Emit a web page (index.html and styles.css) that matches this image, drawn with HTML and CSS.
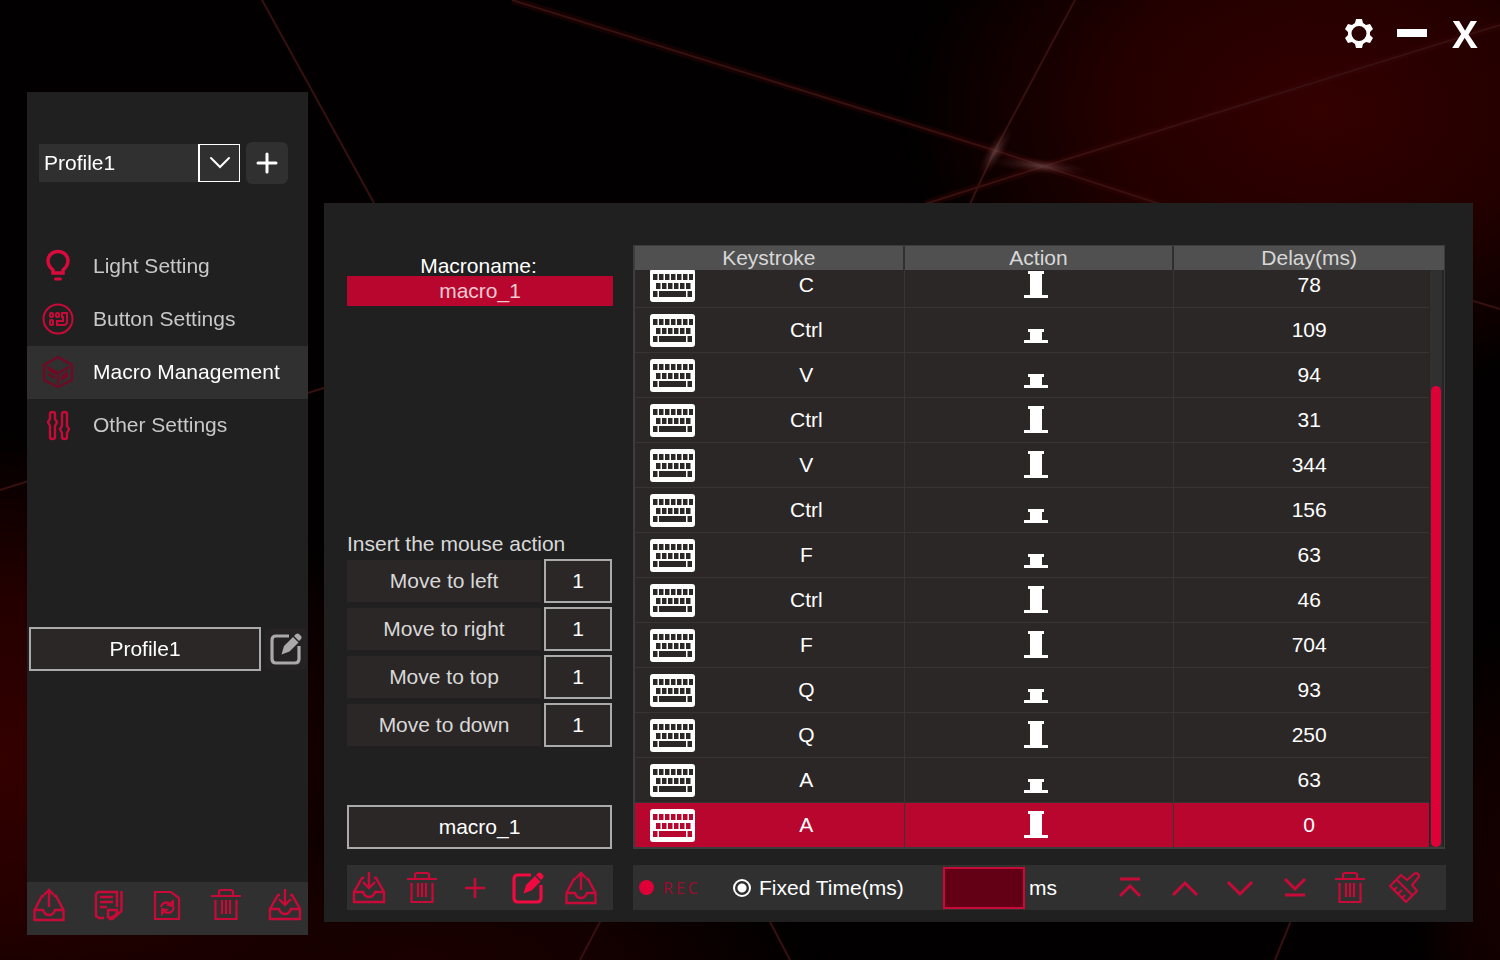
FILE: index.html
```html
<!DOCTYPE html>
<html lang="en">
<head>
<meta charset="utf-8">
<title>Macro Management</title>
<link rel="stylesheet" href="styles.css">
</head>
<body>
<svg class="backdrop" viewBox="0 0 1500 960" preserveAspectRatio="none" aria-hidden="true">
  <defs>
    <radialGradient id="glow"><stop offset="0" stop-color="#340000"/><stop offset=".5" stop-color="#2a0000" stop-opacity=".85"/><stop offset="1" stop-color="#280000" stop-opacity="0"/></radialGradient>
    <radialGradient id="flare"><stop offset="0" stop-color="#806060" stop-opacity=".55"/><stop offset="1" stop-color="#501010" stop-opacity="0"/></radialGradient>
  </defs>
  <ellipse cx="1320" cy="110" rx="420" ry="290" fill="url(#glow)"/>
  <ellipse cx="0" cy="760" rx="420" ry="330" fill="url(#glow)"/>
  <ellipse cx="420" cy="960" rx="400" ry="120" fill="url(#glow)" opacity=".5"/>
  <ellipse cx="1500" cy="880" rx="90" ry="260" fill="url(#glow)" opacity=".4"/>
  <g class="beam-glow"><path d="M512 0 1000 152 1160 204"/><path d="M1500 25 1045 166 925 204"/></g>
  <g class="beams">
    <path d="M262 0 374 203"/><path d="M512 0 1000 152 1160 204"/><path d="M1075 0 995 150 970 204"/>
    <path d="M1500 25 1045 166 925 204"/><path d="M0 490 330 386"/><path d="M602 918 580 960"/>
    <path d="M768 918 790 960"/><path d="M1292 918 1275 960"/><path d="M1470 300 1500 309"/>
  </g>
  <ellipse cx="1040" cy="166" rx="50" ry="8" fill="url(#flare)" transform="rotate(6 1040 166)"/>
  <ellipse cx="995" cy="152" rx="30" ry="9" fill="url(#flare)" transform="rotate(-58 995 152)"/>
</svg>

<svg class="sprite" aria-hidden="true">
  <symbol id="upload" viewBox="0 0 34 36"><g fill="none" stroke="currentColor" stroke-width="2.400"><path d="M12 9H10L2.500 23v10h29V23L24 9h-2M2.500 23H11c1 3 3 5 6 5s5-2 6-5h8.500M17 3v17M12 8l5-5 5 5"/></g></symbol>
  <symbol id="download" viewBox="0 0 34 36"><g fill="none" stroke="currentColor" stroke-width="2.400"><path d="M12 8H10L2 22v10h30V22L24 8h-2M2 22h9c1 3 3 5 6 5s5-2 6-5h9M17 2v16M11 12l6 6 6-6"/></g></symbol>
  <symbol id="trash" viewBox="0 0 34 36"><g fill="none" stroke="currentColor" stroke-width="2.200"><path d="M2 9h30M10 9V5q0-2 2-2h10q2 0 2 2v4M6.500 13v19h21V13M13 13v14M17 13v14M21 13v14"/></g></symbol>
  <symbol id="edit" viewBox="0 0 34 36"><path d="M20 5H7Q3 5 3 9v19q0 4 4 4h19q4 0 4-4V15" fill="none" stroke="currentColor" stroke-width="3.200"/><path d="m12.500 23.500 2.500-8.500L24 6l5.500 5.500-9 9zM25 5l2-2q1.500-1 3 0l2 2q1.500 1.500 0 3l-2 2z" fill="currentColor"/></symbol>
  <symbol id="plus" viewBox="0 0 24 24"><path d="M12 3v18M3 12h18" fill="none" stroke="currentColor" stroke-width="3" stroke-linecap="round"/></symbol>
  <symbol id="notes" viewBox="0 0 34 36"><g fill="none" stroke="currentColor" stroke-width="2.400"><path d="M26 20V5H7L5 7v22l3 2h5M9 10h13M9 15h13M9 20h7M17 31v-8h9v2q-1 5-9 6M30.500 4v20l-9 8H18"/></g></symbol>
  <symbol id="refresh" viewBox="0 0 34 36"><g fill="none" stroke="currentColor" stroke-width="2.200"><path d="M5 5h16l8 6v21H5z"/><path d="M11 20q2-6 8-4M24 20q-2 8-9 5"/></g><path d="m16 18.500 8 2V12zM19 22l-8-1v8z" fill="currentColor"/></symbol>
  <symbol id="keyboard" viewBox="0 0 45 33"><path fill="currentColor" fill-rule="evenodd" d="M3 0h39q3 0 3 3v27q0 3-3 3H3q-3 0-3-3V3q0-3 3-3zM3 5v6h4.500V5zm6 0v6h4.500V5zm6 0v6h4.500V5zm6 0v6h4.500V5zm6 0v6h4.500V5zm6 0v6h4.500V5zm6 0v6h4V5zM6 14v6h4.500v-6zm6 0v6h4.500v-6zm6 0v6h4.500v-6zm6 0v6h4.500v-6zm6 0v6h4.500v-6zm6 0v6h4.500v-6zM3 22v6h4.500v-6zm6 0v6h27v-6zm28.500 0v6H42v-6z"/></symbol>
  <symbol id="release" viewBox="0 0 30 28"><path fill="currentColor" d="M4 0h16v3h-2v21h6v3H0v-3h6V3H4z"/></symbol>
  <symbol id="press" viewBox="0 0 30 28"><path fill="currentColor" d="M4 13h16v3h-2v8h6v3H0v-3h6v-8H4z"/></symbol>
</svg>

<div class="window">
  <header class="titlebar">
    <button class="win-btn" aria-label="Settings"><svg width="28" height="30" viewBox="0 0 28 30"><path fill="#fff" fill-rule="evenodd" d="M11 1h6l1 4 3 2 4-1 3 5-3 3v3l3 3-3 5-4-1-3 2-1 4h-6l-1-4-3-2-4 1-3-5 3-3v-3l-3-3 3-5 4 1 3-2zM14 8a7.500 7.500 0 1 0 0 15 7.500 7.500 0 0 0 0-15z"/></svg></button>
    <button class="win-btn" aria-label="Minimize"><svg width="30" height="10" viewBox="0 0 30 10"><path fill="#fff" d="M0 1h30v8H0z"/></svg></button>
    <button class="win-btn close" aria-label="Close">X</button>
  </header>

  <div class="workspace">
    <aside class="sidebar">
      <div class="profile-pick">
        <label class="combo">
          <select aria-label="Profile"><option>Profile1</option></select>
          <span class="combo-arrow"><svg width="24" height="14" viewBox="0 0 24 14"><path d="m3 2 9 9 9-9" fill="none" stroke="#fff" stroke-width="2" stroke-linecap="round"/></svg></span>
        </label>
        <button class="add" aria-label="Add profile"><svg width="24" height="24"><use href="#plus"/></svg></button>
      </div>
      <nav class="menu">
        <a href="#light"><svg width="32" height="34" viewBox="0 0 32 34"><g fill="none" stroke="#d90a3c"><path stroke-width="3.500" d="M11 24v-3q-5-4-5-9.500a10 9 0 0 1 20 0q0 5.500-5 9.500v3z"/><path stroke-width="3" stroke-linecap="round" d="M13.500 30h5"/></g></svg>Light Setting</a>
        <a href="#buttons"><svg width="32" height="34" viewBox="0 0 32 34"><g fill="none" stroke="#c80a38"><circle cx="16" cy="17" r="14.500" stroke-width="2"/><g stroke-width="2"><rect x="8" y="11" width="3" height="4" rx="1"/><rect x="8" y="18" width="3" height="5" rx="1"/><rect x="14" y="11" width="3" height="4" rx="1"/><path d="M20 11h5v10l-2 2h-8v-4h6v-4h-1z"/></g></g></svg>Button Settings</a>
        <a href="#macro" class="active" aria-current="page"><svg width="32" height="34" viewBox="0 0 32 34"><g fill="none" stroke="#720823" stroke-width="2.200"><path d="M16 2 30 10v15L16 32 2 25V10zM5 12l11 6 11-6M16 18v11M6 19l7 4M6 14l8 5"/></g><path d="m19 21 7-5v6l-7 4z" fill="#720823"/></svg>Macro Management</a>
        <a href="#other"><svg width="32" height="34" viewBox="0 0 32 34"><g fill="none" stroke="#c80a38" stroke-width="2.400"><path d="M8 6q0-2 2.500-2T13 6v5l2 3-2 4v11q0 2-2.500 2T8 29V18l-2-4 2-3zM20 6q0-2 2.500-2T25 6v12l2 3-2 4v4q0 2-2.500 2T20 29v-4l-2-4 2-3z"/></g></svg>Other Settings</a>
      </nav>
      <div class="profile-name">
        <input class="field" type="text" value="Profile1" aria-label="Profile name">
        <button class="rename" aria-label="Rename profile"><svg width="34" height="36"><use href="#edit"/></svg></button>
      </div>
      <div class="tools side-tools">
        <button aria-label="Export profile"><svg width="34" height="36"><use href="#upload"/></svg></button>
        <button aria-label="Copy profile"><svg width="34" height="36"><use href="#notes"/></svg></button>
        <button aria-label="Reset profile"><svg width="34" height="36"><use href="#refresh"/></svg></button>
        <button aria-label="Delete profile"><svg width="34" height="36"><use href="#trash"/></svg></button>
        <button aria-label="Import profile"><svg width="34" height="36"><use href="#download"/></svg></button>
      </div>
    </aside>

    <main class="panel">
      <section class="macros">
        <h2>Macroname:</h2>
        <ul class="macro-list"><li>macro_1</li></ul>
        <h3>Insert the mouse action</h3>
        <div class="moves">
          <div class="move"><button>Move to left</button><input class="field" type="text" value="1" aria-label="Left distance"></div>
          <div class="move"><button>Move to right</button><input class="field" type="text" value="1" aria-label="Right distance"></div>
          <div class="move"><button>Move to top</button><input class="field" type="text" value="1" aria-label="Top distance"></div>
          <div class="move"><button>Move to down</button><input class="field" type="text" value="1" aria-label="Down distance"></div>
        </div>
        <input class="field macro-name" type="text" value="macro_1" aria-label="Macro name">
        <div class="tools macro-tools">
          <button aria-label="Import macro"><svg width="34" height="36"><use href="#download"/></svg></button>
          <button aria-label="Delete macro"><svg width="34" height="36"><use href="#trash"/></svg></button>
          <button aria-label="Add macro"><svg width="24" height="24" viewBox="0 0 24 24"><path d="M12 2v20M2 12h20" fill="none" stroke="currentColor" stroke-width="2.500"/></svg></button>
          <button class="bright" aria-label="Rename macro"><svg width="34" height="36"><use href="#edit"/></svg></button>
          <button aria-label="Export macro"><svg width="34" height="36"><use href="#upload"/></svg></button>
        </div>
      </section>

      <section class="events">
        <div class="grid-frame">
          <table>
            <thead><tr><th>Keystroke</th><th>Action</th><th>Delay(ms)</th></tr></thead>
            <tbody>
              <tr><td><svg class="kb"><use href="#keyboard"/></svg><span>C</span></td><td><svg class="act"><use href="#release"/></svg></td><td>78</td></tr>
              <tr><td><svg class="kb"><use href="#keyboard"/></svg><span>Ctrl</span></td><td><svg class="act"><use href="#press"/></svg></td><td>109</td></tr>
              <tr><td><svg class="kb"><use href="#keyboard"/></svg><span>V</span></td><td><svg class="act"><use href="#press"/></svg></td><td>94</td></tr>
              <tr><td><svg class="kb"><use href="#keyboard"/></svg><span>Ctrl</span></td><td><svg class="act"><use href="#release"/></svg></td><td>31</td></tr>
              <tr><td><svg class="kb"><use href="#keyboard"/></svg><span>V</span></td><td><svg class="act"><use href="#release"/></svg></td><td>344</td></tr>
              <tr><td><svg class="kb"><use href="#keyboard"/></svg><span>Ctrl</span></td><td><svg class="act"><use href="#press"/></svg></td><td>156</td></tr>
              <tr><td><svg class="kb"><use href="#keyboard"/></svg><span>F</span></td><td><svg class="act"><use href="#press"/></svg></td><td>63</td></tr>
              <tr><td><svg class="kb"><use href="#keyboard"/></svg><span>Ctrl</span></td><td><svg class="act"><use href="#release"/></svg></td><td>46</td></tr>
              <tr><td><svg class="kb"><use href="#keyboard"/></svg><span>F</span></td><td><svg class="act"><use href="#release"/></svg></td><td>704</td></tr>
              <tr><td><svg class="kb"><use href="#keyboard"/></svg><span>Q</span></td><td><svg class="act"><use href="#press"/></svg></td><td>93</td></tr>
              <tr><td><svg class="kb"><use href="#keyboard"/></svg><span>Q</span></td><td><svg class="act"><use href="#release"/></svg></td><td>250</td></tr>
              <tr><td><svg class="kb"><use href="#keyboard"/></svg><span>A</span></td><td><svg class="act"><use href="#press"/></svg></td><td>63</td></tr>
              <tr class="selected"><td><svg class="kb"><use href="#keyboard"/></svg><span>A</span></td><td><svg class="act"><use href="#release"/></svg></td><td>0</td></tr>
            </tbody>
          </table>
          <div class="scrollbar"><div class="thumb"></div></div>
        </div>
        <div class="record-bar">
          <button class="rec"><span class="dot"></span>REC</button>
          <label class="fixed"><input type="radio" name="timing" checked>Fixed Time(ms)</label>
          <label class="time"><input type="text" aria-label="Fixed time"><span>ms</span></label>
          <div class="row-tools">
            <button aria-label="Move to first"><svg width="34" height="36" viewBox="0 0 34 36"><path d="M7 9h20M7 26l10-10 10 10" fill="none" stroke="currentColor" stroke-width="3"/></svg></button>
            <button aria-label="Move up"><svg width="34" height="36" viewBox="0 0 34 36"><path d="M5 25 17 13l12 12" fill="none" stroke="currentColor" stroke-width="3"/></svg></button>
            <button aria-label="Move down"><svg width="34" height="36" viewBox="0 0 34 36"><path d="M5 12 17 24l12-12" fill="none" stroke="currentColor" stroke-width="3"/></svg></button>
            <button aria-label="Move to last"><svg width="34" height="36" viewBox="0 0 34 36"><path d="M7 25h20M7 9l10 10L27 9" fill="none" stroke="currentColor" stroke-width="3"/></svg></button>
            <button aria-label="Delete event"><svg width="34" height="36"><use href="#trash"/></svg></button>
            <button aria-label="Clear all"><svg width="34" height="36" viewBox="0 0 34 36"><g fill="none" stroke="currentColor" stroke-width="2.200" stroke-linejoin="round"><path d="m13 5 6 5 7-6q2-2 4 0t0 4l-6 7 5 6-11 11L2 16zM8 9l17 17M6 20l3-3M10 24l4-4M14 28l3-3"/></g></svg></button>
          </div>
        </div>
      </section>
    </main>
  </div>
</div>
</body>
</html>
```
FILE: styles.css
```css
* { box-sizing: border-box; }
body {
  margin: 0;
  background: #020000;
  color: #fff;
  font: 21px/24px "Liberation Sans", Arial, sans-serif;
}
button, input, select { font: inherit; color: inherit; border: 0; margin: 0; padding: 0; border-radius: 0; }
button { background: none; display: flex; align-items: center; justify-content: center; cursor: pointer; }
svg { display: block; flex: none; }
.sprite { display: none; }
.backdrop { position: fixed; inset: 0; width: 100%; height: 100%; z-index: -1; }
.beams { fill: none; stroke: #381010; stroke-width: 2; }
.beam-glow { fill: none; stroke: #3a0606; stroke-opacity: .35; stroke-width: 8; }

.window { min-height: 100vh; display: flex; flex-direction: column; padding: 0 27px 25px; }
.titlebar { height: 92px; display: flex; justify-content: flex-end; align-items: flex-start; gap: 24px; padding-top: 13px; margin-right: -6px; }
.win-btn { height: 40px; min-width: 28px; }
.close { font: bold 38px/40px "Open Sans", sans-serif; }
.workspace { flex: 1; display: flex; gap: 16px; }

.sidebar { width: 281px; flex: none; display: flex; flex-direction: column; background: #202020; }
.profile-pick { display: flex; align-items: center; gap: 6px; padding: 50px 20px 0 12px; }
.combo { position: relative; flex: 1; height: 38px; }
.combo select { width: 100%; height: 38px; padding: 0 46px 0 5px; appearance: none; background: #303030; }
.combo-arrow { position: absolute; top: 0; right: 0; width: 42px; height: 38px; border: 1px solid #fff; border-left-width: 2px; background: #303030; display: grid; place-items: center; pointer-events: none; }
.add { width: 42px; height: 42px; border-radius: 6px; background: #303030; }
.menu { margin-top: 56px; }
.menu a { height: 53px; display: flex; align-items: center; gap: 19px; padding: 0 0 2px 15px; color: #c8c8c8; text-decoration: none; }
.menu .active { background: #303030; color: #fff; }
.field { display: block; min-width: 0; height: 44px; border: 2px solid #aaa; background: #2b2727; text-align: center; }
.profile-name { display: flex; align-items: center; gap: 4px; padding: 0 1px 0 2px; margin: 175px 0 auto; }
.profile-name .field { flex: 1; }
.rename { width: 42px; height: 42px; border-radius: 6px; background: #242222; color: #aaa; }
.tools { display: flex; justify-content: space-between; align-items: center; background: #303030; color: #c80a38; }
.tools button { width: 34px; height: 36px; }
.tools .bright { color: #f00a40; }
.side-tools { height: 53px; padding: 0 6px 8px 5px; }

.panel { flex: 1; min-width: 0; display: flex; gap: 20px; margin: 111px 0 13px; padding: 42px 28px 12px 23px; background: #202020; }
.macros { width: 266px; flex: none; display: flex; flex-direction: column; }
h2, h3 { margin: 0; font: inherit; }
h2 { text-align: center; padding: 9px 3px 0 0; height: 31px; }
.macro-list { list-style: none; margin: 0 0 auto; padding: 0; }
.macro-list li { height: 30px; line-height: 30px; text-align: center; background: #b8062f; color: #f0c8d0; }
h3 { color: #d8d8d8; height: 27px; }
.moves { display: grid; gap: 4px; margin-right: 1px; }
.move { display: grid; grid-template-columns: 1fr 68px; gap: 3px; align-items: center; }
.move button { height: 42px; background: #2b2727; color: #d8d8d8; }
.move .field { width: 68px; }
.macro-name { margin: 58px 1px 16px 0; }
.macro-tools { height: 45px; padding: 0 15px 0 5px; }

.events { flex: 1; min-width: 0; display: flex; flex-direction: column; gap: 16px; }
.grid-frame { position: relative; flex: 1 1 0; min-height: 0; display: flex; border: 1px solid #3c3c3c; border-width: 1px 1px 2px 2px; background: #2b2727; }
table { flex: 1; min-height: 0; display: flex; flex-direction: column; }
thead { display: block; background: #505050; color: #d8d8d8; }
tr { display: grid; grid-template-columns: repeat(3, 1fr); }
th { font-weight: normal; padding: 0; height: 24px; border-right: 2px solid #303030; }
th:last-child, td:last-child { border-right: 0; }
tbody { flex: 1 1 0; min-height: 0; display: flex; flex-direction: column; justify-content: flex-end; overflow: hidden; }
tbody tr { flex: none; height: 45px; border-top: 1px solid #383434; }
td { display: flex; align-items: center; justify-content: center; padding: 0; border-right: 1px solid #383434; }
td:first-child { padding-left: 15px; gap: 14px; }
td span { flex: 1; text-align: center; }
.kb { width: 45px; height: 33px; }
.act { width: 30px; height: 28px; }
.selected { background: #b8062f; }
.scrollbar { position: absolute; top: 24px; right: 0; bottom: 0; width: 15px; padding: 1px 2px 0 1px; background: linear-gradient(#303030, #303030) 1px 0 / 12px 100% no-repeat #262424; display: flex; align-items: flex-end; }
.thumb { width: 10px; height: 80%; margin-left: 1px; border-radius: 5px; background: #e00038; }

.record-bar { height: 45px; display: flex; align-items: center; padding-left: 6px; margin-right: -1px; background: #303030; }
.rec { width: 60px; gap: 9px; justify-content: flex-start; color: #a00a30; font: 16px/20px "Open Sans", sans-serif; letter-spacing: 3px; }
.dot { width: 15px; height: 15px; border-radius: 50%; background: #e00038; flex: none; }
.fixed { display: flex; align-items: center; gap: 8px; margin-left: 34px; width: 210px; }
.fixed input { appearance: none; width: 18px; height: 18px; border: 2px solid #fff; border-radius: 50%; background: radial-gradient(circle, #fff 0 4px, transparent 5px); }
.time { display: flex; align-items: center; gap: 4px; }
.time input { width: 82px; height: 42px; border: 2px solid #c80a38; background: #640016; text-align: center; }
.row-tools { flex: 1; display: flex; justify-content: flex-end; gap: 21px; padding-right: 24px; color: #c80a38; }
.row-tools button { width: 34px; height: 36px; }
```
